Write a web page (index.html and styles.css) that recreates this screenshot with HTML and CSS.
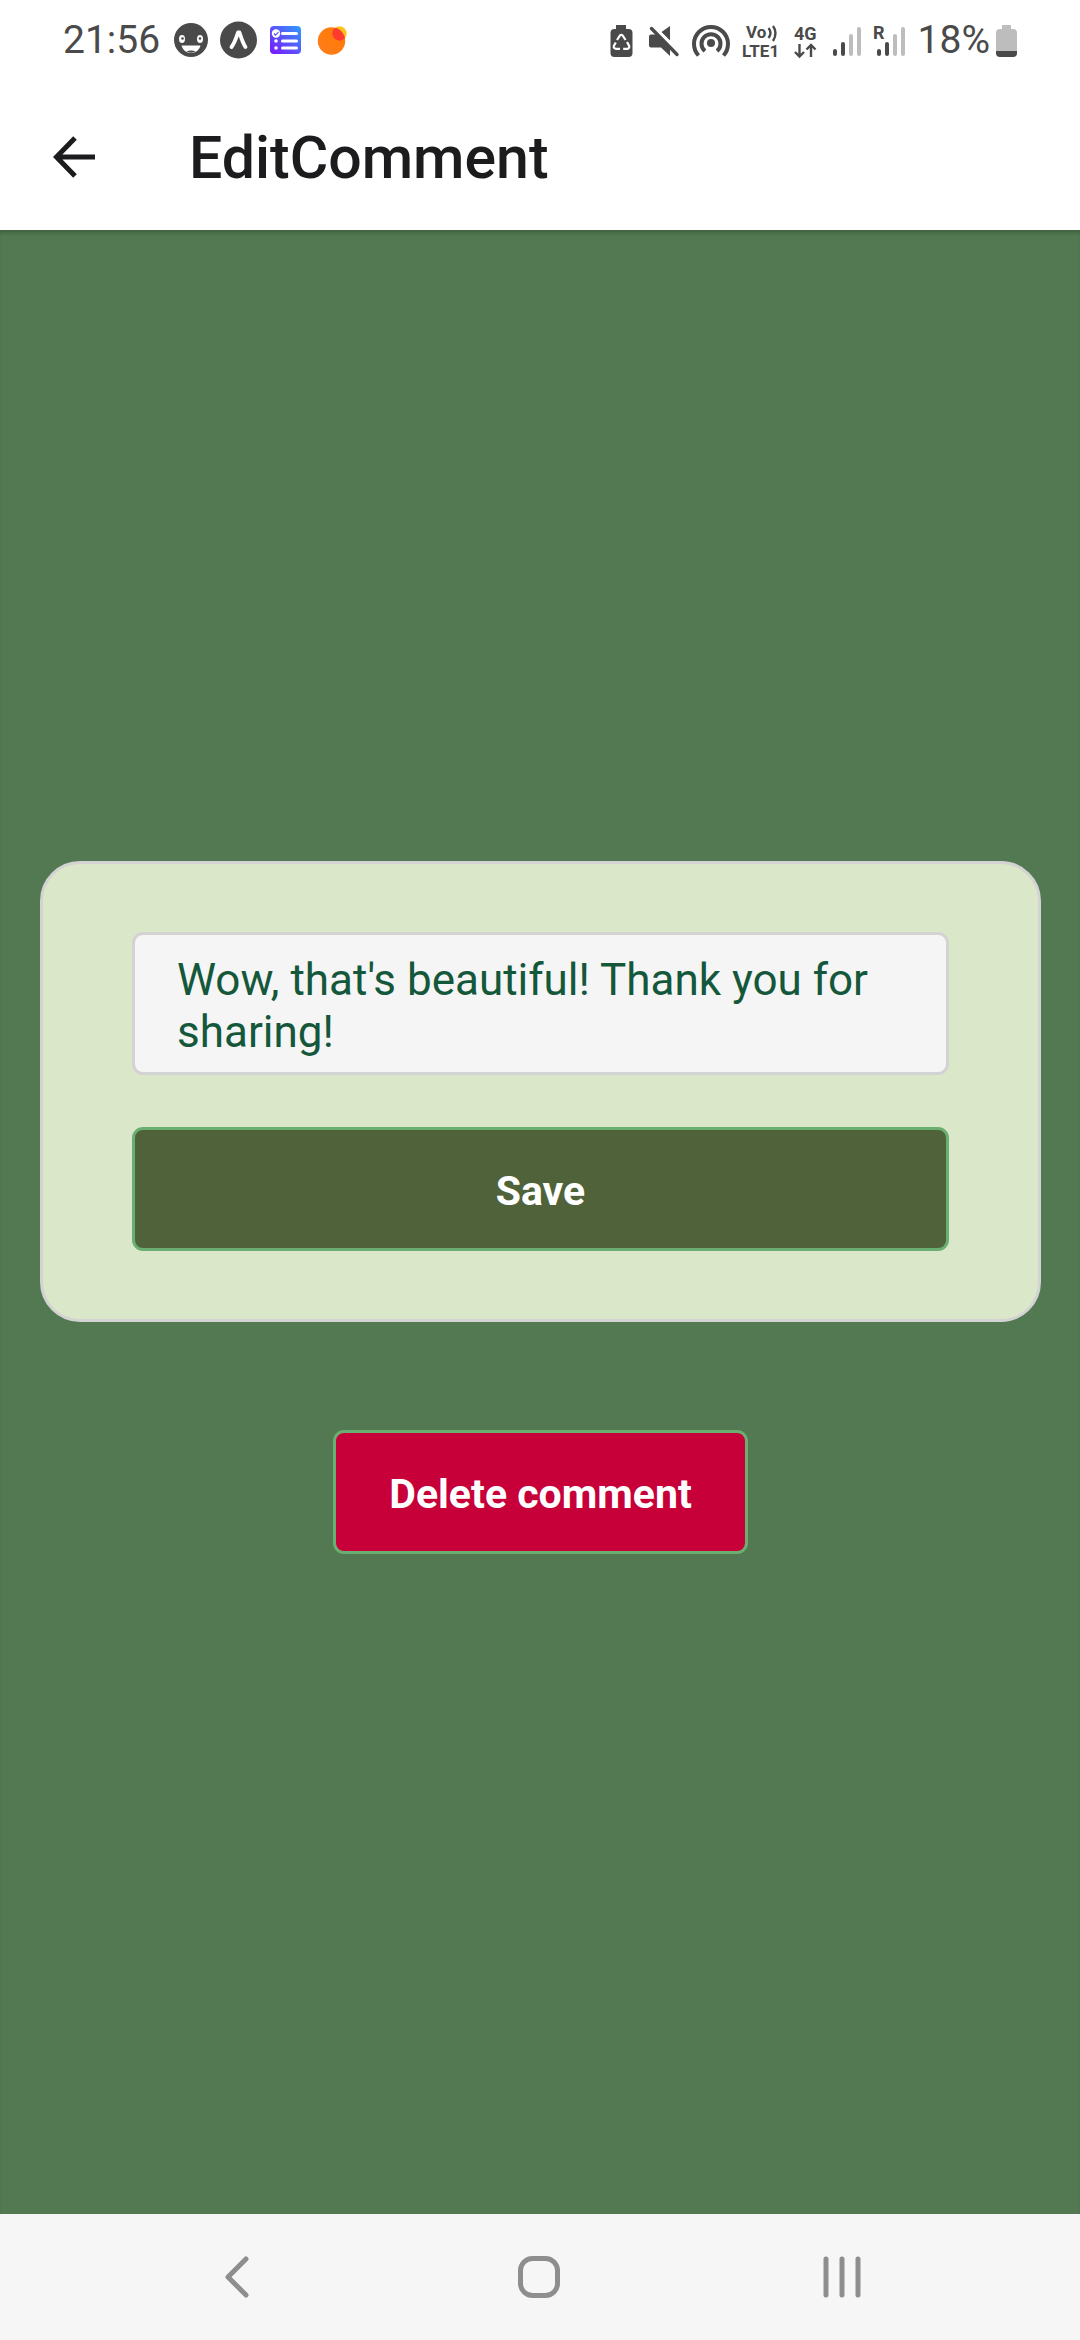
FILE: index.html
```html
<!DOCTYPE html>
<html lang="en">
<head>
<meta charset="utf-8">
<meta name="viewport" content="width=device-width, initial-scale=1">
<title>EditComment</title>
<link rel="stylesheet" href="styles.css">
</head>
<body>
<div class="screen">
  <div class="status">
    <div class="status-left">
      <span class="clock">21:56</span>
      <svg class="app-icon" viewBox="0 0 47 40" aria-hidden="true">
        <circle cx="23" cy="20" r="17" fill="#4a4a4a"/>
        <ellipse cx="14" cy="19" rx="3" ry="4" fill="#fff"/>
        <ellipse cx="32" cy="19" rx="3" ry="4" fill="#fff"/>
        <circle cx="14.500" cy="18.500" r="1.300" fill="#4a4a4a"/>
        <circle cx="32" cy="18.500" r="1.300" fill="#4a4a4a"/>
        <path d="M13.500 25.500h19c-1 4.500-5 7.500-9.500 7.500s-8.500-3-9.500-7.500z" fill="#fff"/>
        <path d="M18.500 31.500c2.500-1.500 6.500-1.500 9 0-2.500 1.500-6.500 1.500-9 0z" fill="#4a4a4a"/>
      </svg>
      <svg class="app-icon" viewBox="0 0 47 40" aria-hidden="true">
        <circle cx="23.500" cy="20" r="18.500" fill="#4a4a4a"/>
        <path d="M16.500 27C20 22.500 21.500 17 23 12.500h1.500c1.500 4.500 3 10 6 14.500" fill="none" stroke="#fff" stroke-width="3.800" stroke-linejoin="round" stroke-linecap="round"/>
      </svg>
      <svg class="app-icon" viewBox="0 0 47 40" aria-hidden="true">
        <defs><linearGradient id="list-fill" x1="0" y1="1" x2="1" y2="0"><stop offset="0" stop-color="#7a14ff"/><stop offset=".5" stop-color="#5b55fb"/><stop offset="1" stop-color="#2c9dff"/></linearGradient></defs>
        <rect x="8" y="6" width="31" height="28" rx="4" fill="url(#list-fill)"/>
        <circle cx="14" cy="13.500" r="4.200" fill="#fff"/>
        <path d="M12 13.500l1.500 1.700 3-3" fill="none" stroke="#5b55fb" stroke-width="1.200"/>
        <path d="M20.500 13.500h14M20.500 21h14M20.500 28h14" stroke="#fff" stroke-width="3" stroke-linecap="round"/>
        <circle cx="14" cy="21" r="1.800" fill="#fff"/><circle cx="14" cy="28" r="1.800" fill="#fff"/>
      </svg>
      <svg class="app-icon" viewBox="0 0 47 40" aria-hidden="true">
        <defs><linearGradient id="orb-fill" x1="0" y1="1" x2="1" y2="0"><stop offset="0" stop-color="#ff7d1f"/><stop offset="1" stop-color="#ff7a00"/></linearGradient>
        <clipPath id="orb-clip"><circle cx="22.500" cy="21" r="13.700"/></clipPath></defs>
        <circle cx="30.500" cy="13.500" r="7.200" fill="#ffc21a"/>
        <circle cx="22.500" cy="21" r="13.700" fill="url(#orb-fill)"/>
        <circle cx="30.500" cy="13.500" r="7.200" fill="#ff3b30" clip-path="url(#orb-clip)"/>
      </svg>
    </div>
    <div class="status-right">
      <svg width="32" height="40" viewBox="0 0 32 40" aria-hidden="true">
        <path d="M10 5h10v4h2.500a4 4 0 0 1 4 4v20a4 4 0 0 1-4 4H8.500a4 4 0 0 1-4-4V13a4 4 0 0 1 4-4H10z" fill="#4a4a4a"/>
        <path d="M11 20l3-4.500q1.300-1.500 2.600 0l3 4.500M21 22l2.200 4q.6 2.500-2 2.800h-4M14 28.800h-4q-2.800-.4-2.200-2.800l2-3.500" fill="none" stroke="#fff" stroke-width="2.200"/>
      </svg>
      <svg width="32" height="40" viewBox="0 0 32 40" aria-hidden="true">
        <path d="M22 6v14.500L13.500 12zM3 14.500h6L22 28v8l-9-8.500H3q-2 0-2-2v-9q0-2 2-2z" fill="#4a4a4a"/>
        <path d="M5 6L31 32.500" stroke="#fff" stroke-width="3"/>
        <path d="M3.500 8.500L29 34.500" stroke="#4a4a4a" stroke-width="3.400" stroke-linecap="round"/>
      </svg>
      <svg width="42" height="40" viewBox="0 0 42 40" aria-hidden="true">
        <circle cx="21" cy="23" r="4" fill="#4a4a4a"/>
        <path d="M15 31a9.500 9.500 0 1 1 12 0" fill="none" stroke="#4a4a4a" stroke-width="4"/>
        <path d="M8.500 35.500a17 17 0 1 1 25 0" fill="none" stroke="#4a4a4a" stroke-width="4"/>
      </svg>
      <svg width="41" height="40" viewBox="0 0 41 40" aria-label="VoLTE 1" class="volte">
        <text x="4" y="18">Vo</text>
        <path d="M26.500 8q4 5 0 10M31 6q5 7 0 15" fill="none" stroke="#4a4a4a" stroke-width="2.400"/>
        <text x="0" y="37">LTE1</text>
      </svg>
      <svg width="25" height="40" viewBox="0 0 25 40" aria-label="4G" class="network">
        <text x="1" y="20">4G</text>
        <path d="M6.500 24v12M2 32l4.500 4.500L11 32M18 37V25M13.500 29.500L18 25l4.500 4.500" fill="none" stroke="#4a4a4a" stroke-width="2.400"/>
      </svg>
      <svg width="35" height="40" viewBox="0 0 35 40" aria-hidden="true">
        <path d="M7 31v3M15 24v10" stroke="#4a4a4a" stroke-width="4" stroke-linecap="round"/>
        <path d="M23 16v18M31 9v25" stroke="#bdbdbd" stroke-width="4" stroke-linecap="round"/>
      </svg>
      <svg width="35" height="40" viewBox="0 0 35 40" aria-hidden="true" class="network">
        <text x="0" y="19">R</text>
        <path d="M6 31v3M14 24v10" stroke="#4a4a4a" stroke-width="4" stroke-linecap="round"/>
        <path d="M22 16v18M30 9v25" stroke="#bdbdbd" stroke-width="4" stroke-linecap="round"/>
      </svg>
      <div class="battery">
        <span class="clock">18%</span>
        <svg width="21" height="40" viewBox="0 0 21 40" aria-hidden="true">
          <path d="M6 5h9v4h2a4 4 0 0 1 4 4v18H0V13a4 4 0 0 1 4-4h2z" fill="#bdbdbd"/>
          <path d="M0 31h21v2a4 4 0 0 1-4 4H4a4 4 0 0 1-4-4z" fill="#4a4a4a"/>
        </svg>
      </div>
    </div>
  </div>
  <header class="header">
    <button class="back" type="button" aria-label="Go back">
      <svg width="42" height="42" viewBox="0 0 42 42" aria-hidden="true"><path d="M22 2L3.500 21L22 40M3.500 21H42" fill="none" stroke="#1c1c1e" stroke-width="5"/></svg>
    </button>
    <h1 class="title">EditComment</h1>
  </header>
  <main class="content">
    <form class="card">
      <textarea class="comment" rows="2" aria-label="Comment">Wow, that's beautiful! Thank you for sharing!</textarea>
      <button class="button save" type="button">Save</button>
    </form>
    <button class="button delete" type="button">Delete comment</button>
  </main>
  <nav class="navbar" aria-label="System">
    <button type="button" aria-label="Back"><svg width="44" height="44" viewBox="0 0 44 44" aria-hidden="true"><path d="M30 4L12 22l18 18" /></svg></button>
    <button type="button" aria-label="Home"><svg width="44" height="44" viewBox="0 0 44 44" aria-hidden="true"><rect x="2.500" y="3.500" width="37" height="37" rx="12"/></svg></button>
    <button type="button" aria-label="Recents"><svg width="44" height="44" viewBox="0 0 44 44" aria-hidden="true"><path d="M6 4v36M22 4v36M38 4v36"/></svg></button>
  </nav>
</div>
</body>
</html>
```
FILE: styles.css
```css
* {
  box-sizing: border-box;
}

body {
  margin: 0;
  font-family: Roboto, "Liberation Sans", sans-serif;
}

button {
  margin: 0;
  padding: 0;
  border: 0;
  background: none;
  font-family: inherit;
}

svg {
  display: block;
  flex: none;
}

.screen {
  display: flex;
  flex-direction: column;
  min-height: 100vh;
  background: #527952;
}

.status {
  display: flex;
  justify-content: space-between;
  height: 84px;
  padding: 0 63px 4px;
  background: #fff;
  color: #4a4a4a;
}

.status-left,
.status-right,
.battery {
  display: flex;
  align-items: center;
}

.status-right {
  gap: 10px;
}

.battery {
  gap: 6px;
}

.clock {
  font-size: 39px;
  font-weight: 400;
  line-height: 40px;
}

.status-left .clock {
  margin-right: 8px;
}

.app-icon {
  width: 47px;
  height: 40px;
}

.volte {
  font-size: 17px;
  font-weight: 700;
  fill: #4a4a4a;
}

.network {
  font-size: 18px;
  font-weight: 700;
  fill: #4a4a4a;
}

.header {
  display: flex;
  align-items: center;
  gap: 94px;
  height: 146px;
  padding: 0 53px;
  background: #fff;
}

.title {
  margin: 0;
  padding-top: 2px;
  color: #1c1c1e;
  font-size: 59px;
  font-weight: 500;
  line-height: 68px;
}

.content {
  display: flex;
  flex: 1;
  flex-direction: column;
  align-items: center;
  justify-content: center;
  gap: 108px;
  padding: 0 39px 30px 40px;
  box-shadow: inset 0 5px 5px -3px rgba(0, 0, 0, 0.25);
}

.card {
  display: flex;
  flex-direction: column;
  gap: 52px;
  width: 100%;
  padding: 68px 89px;
  border: 3px solid #d3d3d3;
  border-radius: 40px;
  background: #dae7c9;
}

.comment {
  display: block;
  width: 100%;
  margin: 0;
  padding: 19px 42px 14px;
  border: 3px solid #d3d3d3;
  border-radius: 11px;
  outline: 0;
  background: #f5f5f5;
  color: #14573a;
  font-family: inherit;
  font-size: 44px;
  line-height: 52px;
  overflow: hidden;
  resize: none;
}

.button {
  padding: 37px 53px 33px;
  border: 3px solid #6bae72;
  border-radius: 11px;
  color: #fff;
  font-size: 41px;
  font-weight: 700;
  line-height: 48px;
}

.save {
  background: #4f6239;
}

.delete {
  background: #c70039;
}

.navbar {
  display: flex;
  align-items: center;
  justify-content: center;
  gap: 258px;
  height: 126px;
  background: #f6f6f6;
}

.navbar svg {
  fill: none;
  stroke: #8e8e8e;
  stroke-width: 5;
  stroke-linecap: round;
  stroke-linejoin: round;
}
```
